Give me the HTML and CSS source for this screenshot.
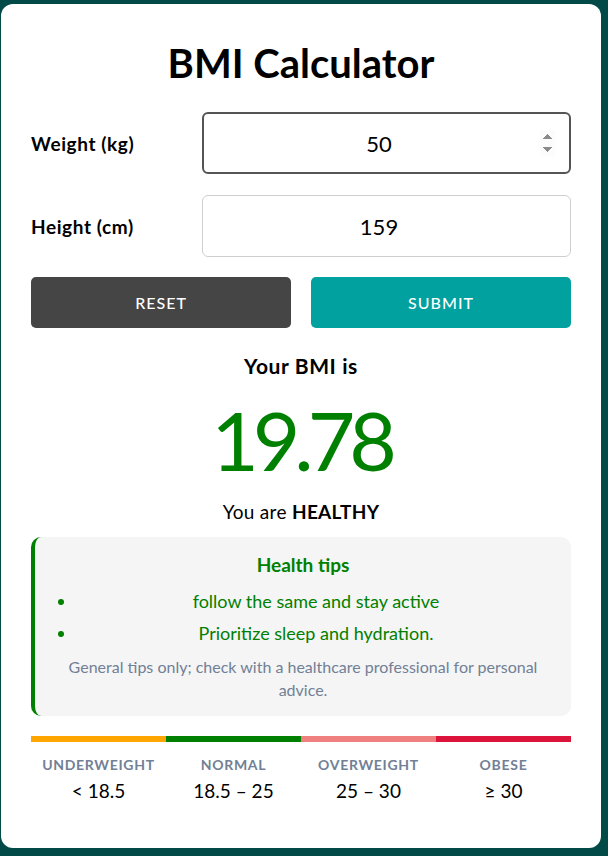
FILE: index.html
```html
<!DOCTYPE html>
<html lang="en">
<head>
<meta charset="utf-8">
<title>BMI Calculator</title>
<link rel="stylesheet" href="styles.css">
</head>
<body>
<main class="card">
  <h1 class="title">BMI Calculator</h1>
  <div class="row">
    <label class="label" for="w">Weight (kg)</label>
    <input class="field field-active" id="w" type="number" value="50" autofocus>
  </div>
  <div class="row">
    <label class="label" for="h">Height (cm)</label>
    <input class="field" id="h" type="number" value="159">
  </div>
  <div class="buttons">
    <button class="btn btn-reset">RESET</button>
    <button class="btn btn-submit">SUBMIT</button>
  </div>
  <p class="bmi-label">Your BMI is</p>
  <p class="bmi-value">19.78</p>
  <p class="bmi-status">You are <strong>HEALTHY</strong></p>
  <section class="tips">
    <h2 class="tips-title">Health tips</h2>
    <ul class="tips-list">
      <li>follow the same and stay active</li>
      <li>Prioritize sleep and hydration.</li>
    </ul>
    <p class="tips-note">General tips only; check with a healthcare professional for personal advice.</p>
  </section>
  <div class="scale">
    <div class="seg"><div class="bar bar-under"></div><div class="seg-name">UNDERWEIGHT</div><div class="seg-range">&lt; 18.5</div></div>
    <div class="seg"><div class="bar bar-normal"></div><div class="seg-name">NORMAL</div><div class="seg-range">18.5 – 25</div></div>
    <div class="seg"><div class="bar bar-over"></div><div class="seg-name">OVERWEIGHT</div><div class="seg-range">25 – 30</div></div>
    <div class="seg"><div class="bar bar-obese"></div><div class="seg-name">OBESE</div><div class="seg-range">≥ 30</div></div>
  </div>
</main>
</body>
</html>
```
FILE: styles.css
```css
html, body {
  margin: 0;
  padding: 0;
}
body {
  background: #014a48;
  font-family: Lato, "Noto Sans", sans-serif;
  color: #000;
  min-height: 856px;
  overflow: hidden;
}
.card {
  box-sizing: border-box;
  width: 600px;
  height: 844px;
  margin: 4px 0 0 1px;
  background: #fff;
  border-radius: 12px;
  padding: 36px 30px 0;
  display: flex;
  flex-direction: column;
}
.title {
  margin: 0 0 26px;
  font-size: 40px;
  line-height: 46px;
  font-weight: 700;
  text-align: center;
}
.row {
  display: grid;
  grid-template-columns: 171px 1fr;
  align-items: center;
  margin-bottom: 21px;
}
.label {
  font-size: 19px;
  font-weight: 700;
  letter-spacing: 0.6px;
}
.field {
  box-sizing: border-box;
  height: 62px;
  width: 100%;
  border: 1px solid #cfcfcf;
  border-radius: 6px;
  font-family: Lato, sans-serif;
  font-size: 22px;
  text-align: center;
  padding: 0 14px;
  color: #000;
  background: #fff;
}
.field-active,
.field:focus {
  border: 2px solid #555;
  outline: none;
}
.buttons {
  display: grid;
  grid-template-columns: 1fr 1fr;
  gap: 20px;
  margin-top: -1px;
}
.btn {
  height: 51px;
  border: none;
  border-radius: 5px;
  color: #fff;
  font-family: Lato, sans-serif;
  font-size: 16px;
  font-weight: 500;
  letter-spacing: 1px;
}
.btn-reset { background: #454545; }
.btn-submit { background: #00a19f; }
.bmi-label {
  margin: 25px 0 0;
  font-size: 21px;
  line-height: 26px;
  font-weight: 700;
  text-align: center;
  letter-spacing: 0.6px;
}
.bmi-value {
  margin: 18px 0 0;
  font-size: 82px;
  line-height: 84px;
  font-weight: 400;
  color: #008000;
  text-align: center;
  letter-spacing: -6px;
}
.bmi-status {
  margin: 19px 0 0;
  font-size: 19px;
  line-height: 24px;
  text-align: center;
  letter-spacing: 0.3px;
}
.bmi-status strong { font-weight: 700; }
.tips {
  margin-top: 13px;
  background: #f5f5f5;
  border-left: 4px solid #008000;
  border-radius: 10px;
  padding: 16px 16px 15px;
  text-align: center;
}
.tips-title {
  margin: 0;
  font-size: 19px;
  line-height: 24px;
  font-weight: 700;
  color: #008000;
}
.tips-list {
  margin: 8px 0 0;
  padding: 0 0 0 26px;
  color: #008000;
  font-size: 18px;
  line-height: 32px;
}
.tips-note {
  margin: 6px 0 0;
  padding: 0 10px;
  font-size: 16px;
  line-height: 23px;
  color: #718096;
}
.scale {
  margin-top: 20px;
  display: grid;
  grid-template-columns: repeat(4, 1fr);
  text-align: center;
}
.bar { height: 6px; }
.bar-under { background: #ffa500; }
.bar-normal { background: #008000; }
.bar-over { background: #f08080; }
.bar-obese { background: #dc143c; }
.seg-name {
  margin-top: 14px;
  font-size: 14px;
  line-height: 18px;
  font-weight: 700;
  color: #718096;
  letter-spacing: 0.7px;
}
.seg-range {
  margin-top: 5px;
  font-size: 19px;
  line-height: 24px;
}
```
